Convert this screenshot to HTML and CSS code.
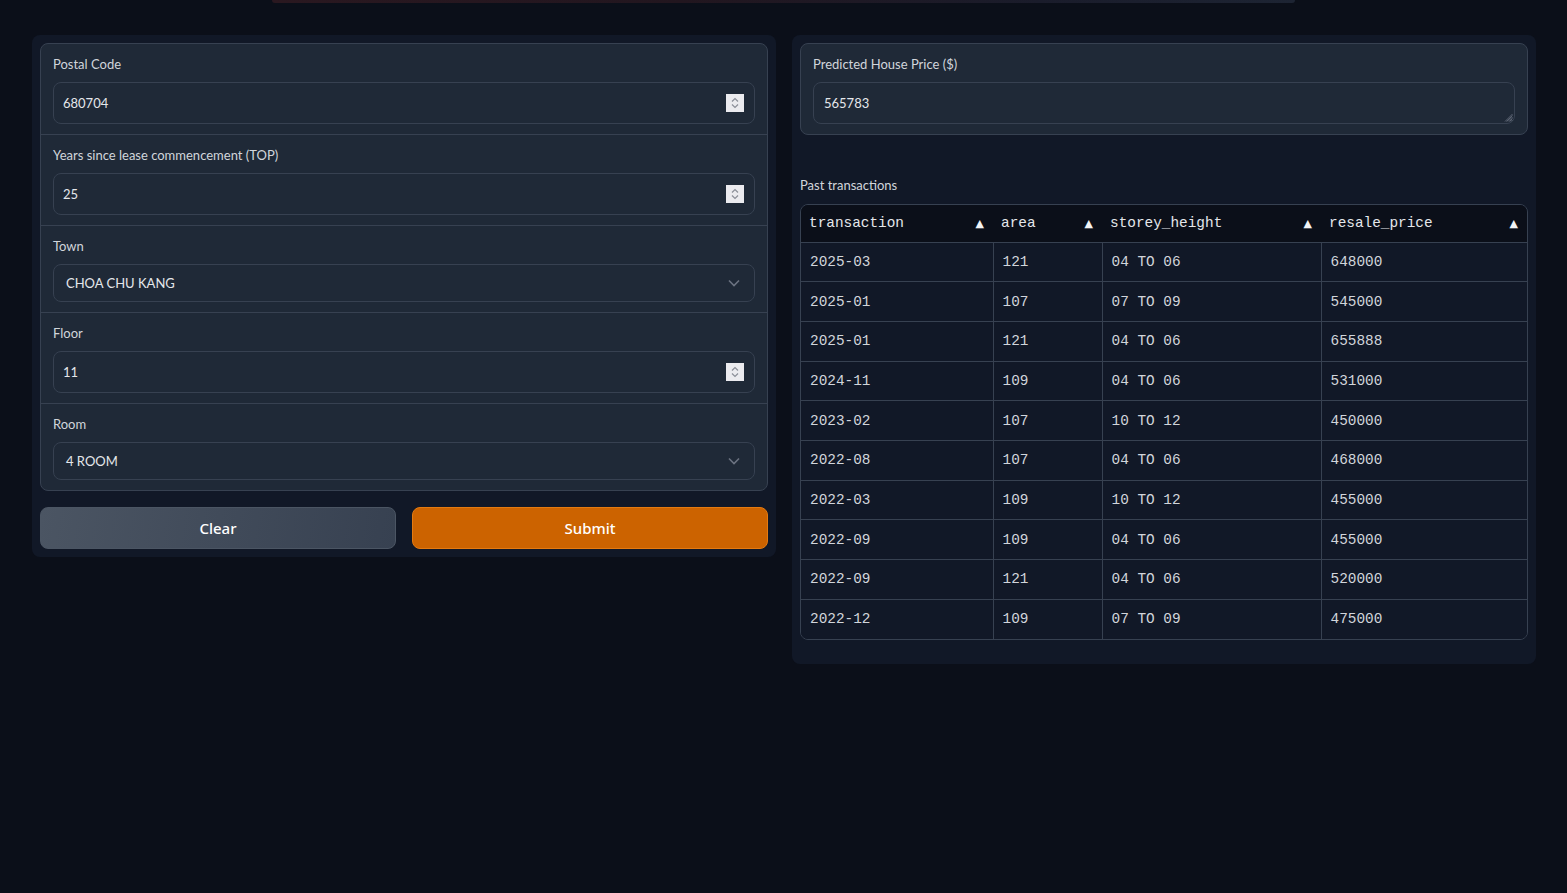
FILE: index.html
```html
<!DOCTYPE html>
<html lang="en">
<head>
<meta charset="utf-8">
<title>House Price Predictor</title>
<link rel="stylesheet" href="styles.css">
</head>
<body>
<div class="topbar"></div>
<main class="main">
  <section class="panel">
    <div class="form">
      <div class="field">
        <span class="label">Postal Code</span>
        <div class="input num">
          <span class="value">680704</span>
          <span class="spin"><svg width="18" height="18" viewBox="0 0 18 18"><path d="M6 7.5 9 4.5l3 3M6 10.5 9 13.5l3-3" fill="none" stroke="#8b8f98" stroke-width="1.2"/></svg></span>
        </div>
      </div>
      <div class="field">
        <span class="label">Years since lease commencement (TOP)</span>
        <div class="input num">
          <span class="value">25</span>
          <span class="spin"><svg width="18" height="18" viewBox="0 0 18 18"><path d="M6 7.5 9 4.5l3 3M6 10.5 9 13.5l3-3" fill="none" stroke="#8b8f98" stroke-width="1.2"/></svg></span>
        </div>
      </div>
      <div class="field">
        <span class="label">Town</span>
        <div class="input select">
          <span class="value">CHOA CHU KANG</span>
          <svg class="chev" width="12" height="8" viewBox="0 0 12 8"><path d="M1 1.5 6 6.5 11 1.5" fill="none" stroke="#6b7280" stroke-width="1.6"/></svg>
        </div>
      </div>
      <div class="field">
        <span class="label">Floor</span>
        <div class="input num">
          <span class="value">11</span>
          <span class="spin"><svg width="18" height="18" viewBox="0 0 18 18"><path d="M6 7.5 9 4.5l3 3M6 10.5 9 13.5l3-3" fill="none" stroke="#8b8f98" stroke-width="1.2"/></svg></span>
        </div>
      </div>
      <div class="field">
        <span class="label">Room</span>
        <div class="input select">
          <span class="value">4 ROOM</span>
          <svg class="chev" width="12" height="8" viewBox="0 0 12 8"><path d="M1 1.5 6 6.5 11 1.5" fill="none" stroke="#6b7280" stroke-width="1.6"/></svg>
        </div>
      </div>
    </div>
    <div class="buttons">
      <button class="btn secondary">Clear</button>
      <button class="btn primary">Submit</button>
    </div>
  </section>

  <section class="panel">
    <div class="form">
      <div class="field">
        <span class="label">Predicted House Price ($)</span>
        <div class="input textarea">
          <span class="value">565783</span>
          <svg class="grip" width="9" height="9" viewBox="0 0 9 9"><path d="M8.5 1 1 8.5M8.5 4 4 8.5M8.5 7 7 8.5M8.5 2.5 2.5 8.5M8.5 5.5 5.5 8.5" stroke="#6b7280" stroke-width="0.8"/></svg>
        </div>
      </div>
    </div>
    <div class="dataframe">
      <span class="df-label">Past transactions</span>
      <div class="table-wrap">
        <table class="table">
          <colgroup>
            <col class="c1"><col class="c2"><col class="c3"><col class="c4">
          </colgroup>
          <thead>
            <tr>
              <th><div class="th"><span>transaction</span><span class="arrow">▲</span></div></th>
              <th><div class="th"><span>area</span><span class="arrow">▲</span></div></th>
              <th><div class="th"><span>storey_height</span><span class="arrow">▲</span></div></th>
              <th><div class="th"><span>resale_price</span><span class="arrow">▲</span></div></th>
            </tr>
          </thead>
          <tbody>
            <tr><td>2025-03</td><td>121</td><td>04 TO 06</td><td>648000</td></tr>
            <tr><td>2025-01</td><td>107</td><td>07 TO 09</td><td>545000</td></tr>
            <tr><td>2025-01</td><td>121</td><td>04 TO 06</td><td>655888</td></tr>
            <tr><td>2024-11</td><td>109</td><td>04 TO 06</td><td>531000</td></tr>
            <tr><td>2023-02</td><td>107</td><td>10 TO 12</td><td>450000</td></tr>
            <tr><td>2022-08</td><td>107</td><td>04 TO 06</td><td>468000</td></tr>
            <tr><td>2022-03</td><td>109</td><td>10 TO 12</td><td>455000</td></tr>
            <tr><td>2022-09</td><td>109</td><td>04 TO 06</td><td>455000</td></tr>
            <tr><td>2022-09</td><td>121</td><td>04 TO 06</td><td>520000</td></tr>
            <tr><td>2022-12</td><td>109</td><td>07 TO 09</td><td>475000</td></tr>
          </tbody>
        </table>
      </div>
    </div>
  </section>
</main>
</body>
</html>
```

FILE: styles.css
```css
* { box-sizing: border-box; }

html, body {
  margin: 0;
  background: #0b0f19;
  font-family: Lato, "Noto Sans", sans-serif;
  color: #e5e7eb;
}

.topbar {
  width: 1023px;
  height: 3px;
  margin: 0 auto;
  border-radius: 0 0 6px 6px;
  background: linear-gradient(90deg, #2a1820 0%, #22161f 40%, #1a1c2b 75%, #1d2433 100%);
}

.main {
  display: grid;
  grid-template-columns: 744px 744px;
  gap: 16px;
  padding: 32px 31px 0 32px;
  align-items: start;
}

.panel {
  background: #111827;
  border-radius: 8px;
  padding: 8px;
  display: flex;
  flex-direction: column;
  gap: 16px;
}

.form {
  background: #1f2937;
  border: 1px solid #374151;
  border-radius: 8px;
  overflow: hidden;
}

.field {
  padding: 10px 12px;
  display: flex;
  flex-direction: column;
}

.field + .field {
  border-top: 1px solid #374151;
}

.label {
  font-size: 13px;
  line-height: 20px;
  color: #d1d5db;
  margin-bottom: 8px;
}

.input {
  display: flex;
  align-items: center;
  background: #1f2937;
  border: 1px solid #374151;
  border-radius: 8px;
  font-size: 13px;
  color: #e5e7eb;
}

.input .value { flex: 1; }

.num {
  height: 42px;
  padding: 0 10px 0 9px;
}

.spin {
  width: 18px;
  height: 18px;
  background: #ebebef;
  display: flex;
}

.select {
  height: 38px;
  padding: 0 14px 0 12px;
}

.chev { display: block; }

.textarea {
  height: 42px;
  padding: 0 1px 1px 10px;
  align-items: stretch;
}

.textarea .value {
  display: flex;
  align-items: center;
}

.grip {
  align-self: flex-end;
}

.buttons {
  display: grid;
  grid-template-columns: 1fr 1fr;
  gap: 16px;
}

.btn {
  height: 42px;
  border-radius: 8px;
  font-family: "Noto Sans", Lato, sans-serif;
  font-size: 15px;
  font-weight: 500;
  color: #ffffff;
  cursor: pointer;
}

.secondary {
  background: linear-gradient(100deg, #4b5563 0%, #374151 100%);
  border: 1px solid #4b5563;
}

.primary {
  background: #cc6300;
  border: 1px solid #e47a10;
}

.dataframe {
  padding: 24px 0 16px;
  display: flex;
  flex-direction: column;
}

.df-label {
  font-size: 13px;
  line-height: 20px;
  color: #d1d5db;
  margin-bottom: 9px;
}

.table-wrap {
  border: 1px solid #374151;
  border-radius: 8px;
  overflow: hidden;
}

.table {
  width: 100%;
  border-collapse: collapse;
  table-layout: fixed;
  font-family: "Liberation Mono", "DejaVu Sans Mono", monospace;
  font-size: 14.4px;
}

.c1 { width: 192px; }
.c2 { width: 109px; }
.c3 { width: 219px; }
.c4 { width: 206px; }

.table th {
  background: #0b0f19;
  height: 37px;
  padding: 0 9px 0 8px;
  font-weight: 400;
  color: #e5e7eb;
  text-align: left;
}

.th {
  display: flex;
  justify-content: space-between;
  align-items: center;
}

.arrow {
  font-family: "DejaVu Sans", sans-serif;
  font-size: 11px;
  color: #f3f4f6;
}

.table td {
  background: #111827;
  height: 39.7px;
  padding: 0 9px;
  color: #d1d5db;
  border-top: 1px solid #374151;
  border-left: 1px solid #374151;
}

.table td:first-child { border-left: none; }
```
